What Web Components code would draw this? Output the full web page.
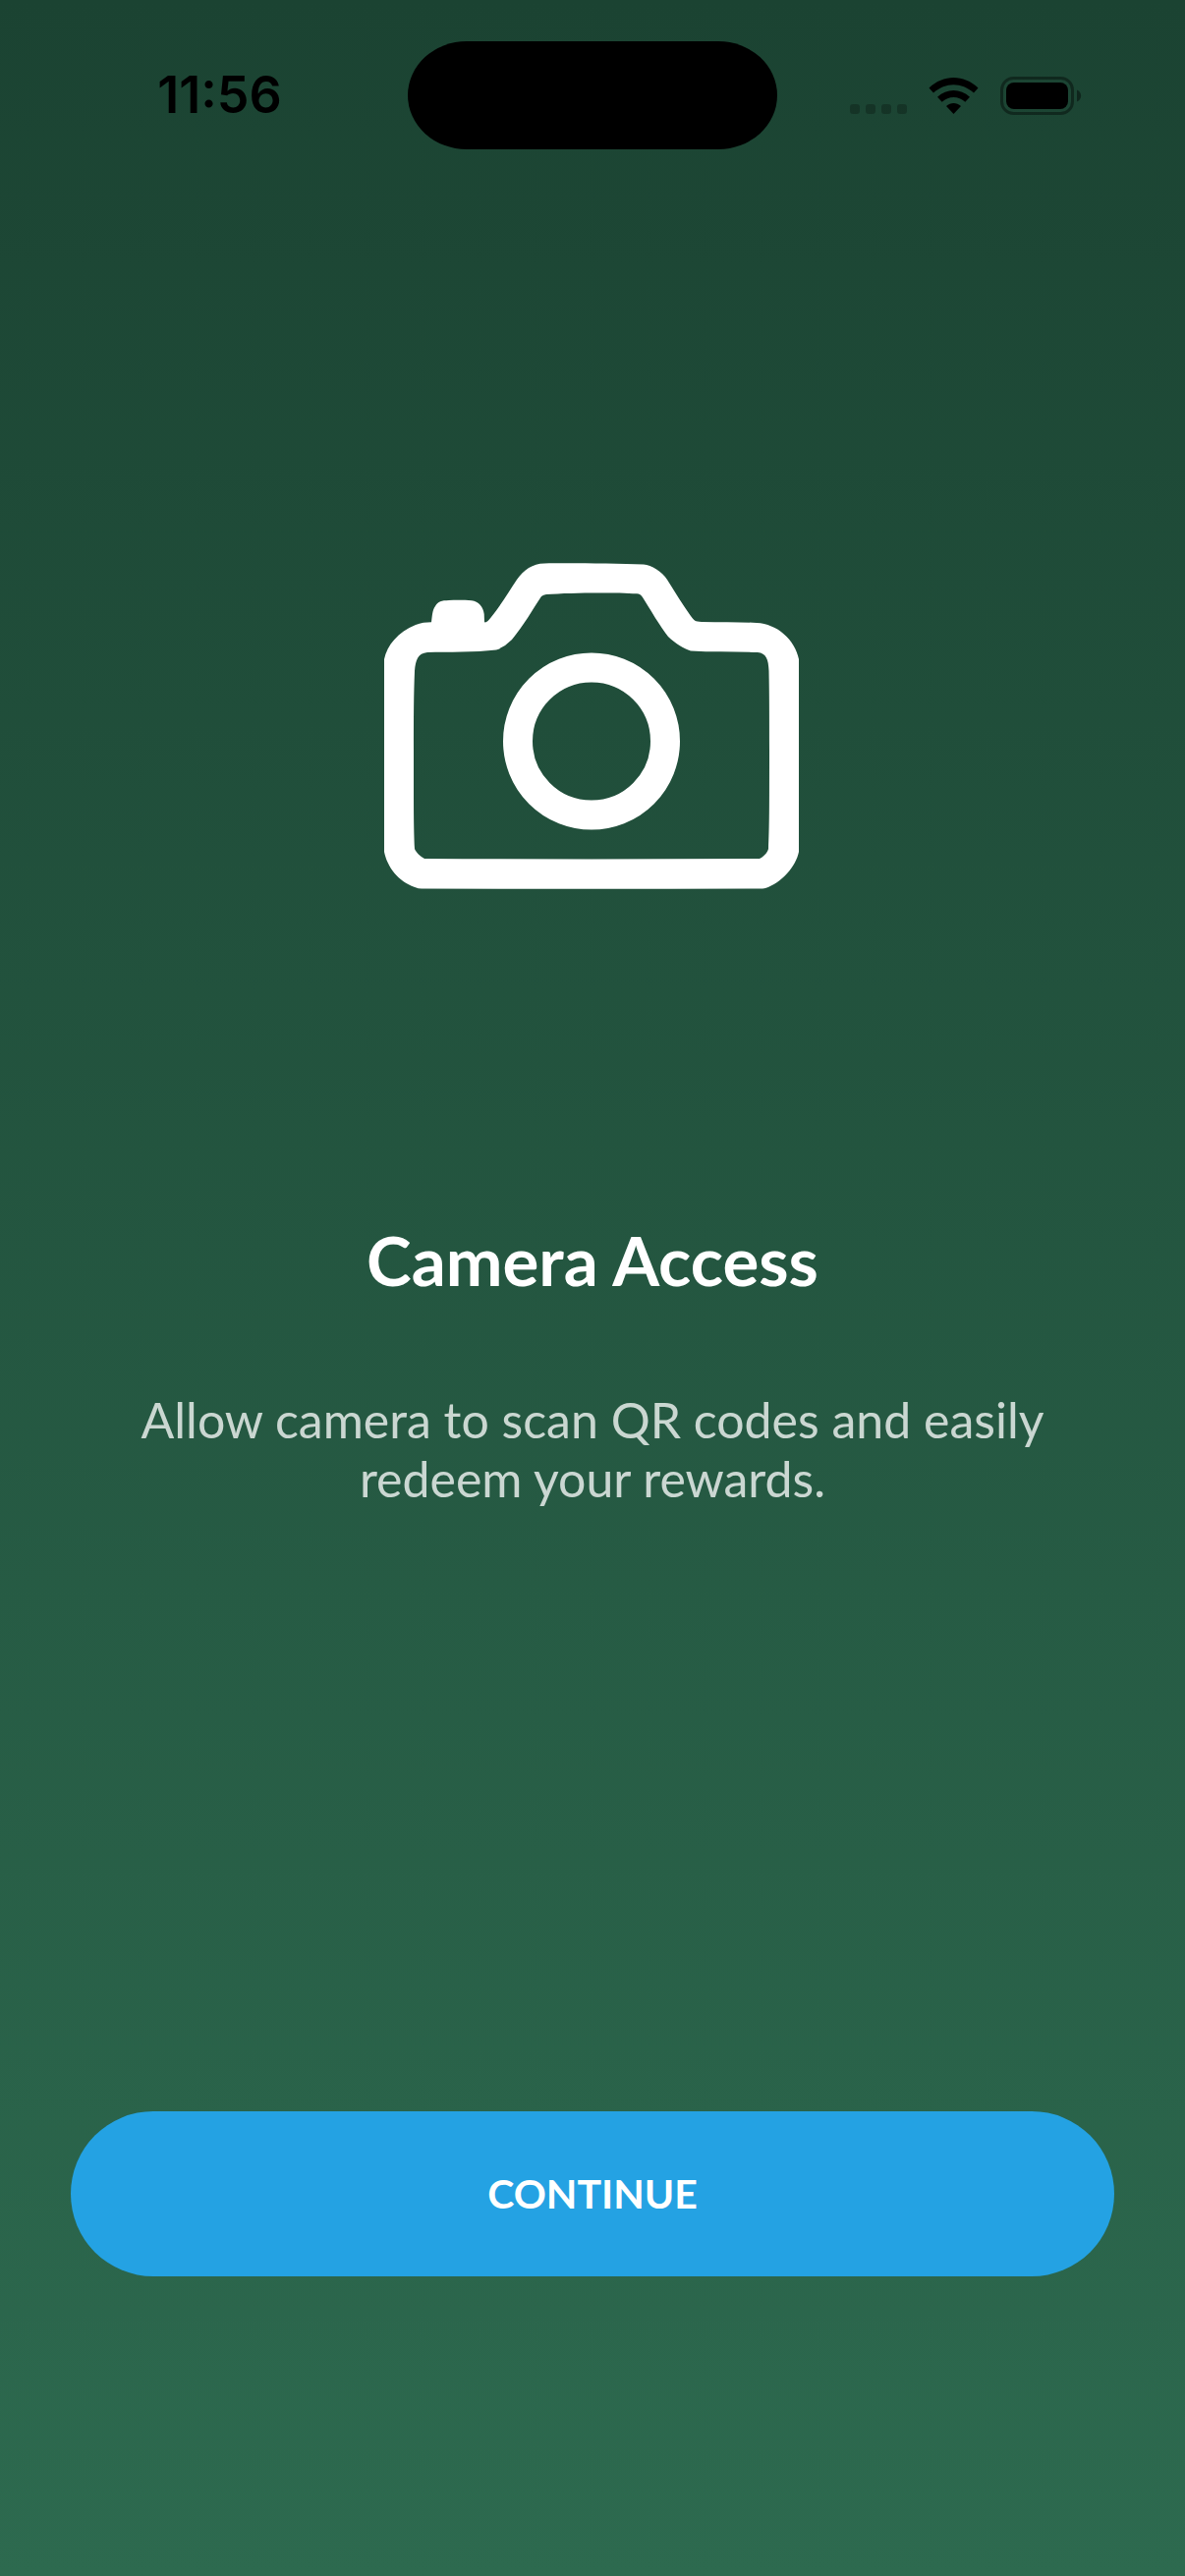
<!DOCTYPE html>
<html lang="en">
<head>
<meta charset="utf-8">
<meta name="viewport" content="width=device-width, initial-scale=1">
<title>Camera Access</title>
<style>
    body {
        margin: 0;
        font-family: Optima, Lato, sans-serif;
        color: #fff;
        background: #1b4332;
    }
</style>
</head>
<body>

<permission-screen>
    <status-bar slot="status" time="11:56"></status-bar>
    <camera-icon slot="icon"></camera-icon>
    <span slot="title">Camera Access</span>
    <span slot="message">Allow camera to scan QR codes and easily redeem your rewards.</span>
    <pill-button slot="action">CONTINUE</pill-button>
</permission-screen>

<script>
class StatusBar extends HTMLElement {

    constructor() {
        super();
        this.__shadowRoot = this.attachShadow({mode: 'open'});
    }

    connectedCallback() {
        this.render();
    }

    render() {
        this.__shadowRoot.innerHTML = `
        <style>
        :host {
            display: grid;
            grid-template-columns: 1fr 376px 1fr;
            align-items: center;
            justify-items: center;
            padding: 42px 32px 0;
            color: #000;
            font-family: Inter, sans-serif;
        }

        time {
            font-size: 52px;
            line-height: 60px;
            font-weight: 600;
        }

        .island {
            width: 100%;
            height: 110px;
            border-radius: 60px / 55px;
            background: #000;
        }

        .icons {
            display: flex;
            align-items: center;
        }

        svg {
            display: block;
        }
        </style>

        <time>${this.getAttribute('time')}</time>
        <div class="island"></div>
        <div class="icons">
            <svg width="236" height="40" viewBox="0 0 236 40" aria-hidden="true">
                <g fill-opacity=".24">
                    <rect x="0" y="29" width="10" height="10" rx="3"/>
                    <rect x="16" y="29" width="10" height="10" rx="3"/>
                    <rect x="32" y="29" width="10" height="10" rx="3"/>
                    <rect x="48" y="29" width="10" height="10" rx="3"/>
                </g>
                <path d="M80.5 12.5C95 -1.5 116 -1.5 130.5 12.5L126 17.5C113.5 6.5 97.5 6.5 85 17.5Z"/>
                <path d="M89 21.7C98.5 12.8 112.5 12.8 122 21.7L117.3 26.7C110.5 20.3 100.5 20.3 93.7 26.7Z"/>
                <path d="M98 31C102.5 27 108.5 27 113 31L105.5 39Z"/>
                <rect x="154.5" y="2.5" width="72" height="36" rx="12" fill="none" stroke="#000" stroke-width="3" stroke-opacity=".4"/>
                <rect x="159" y="7" width="63" height="27" rx="8"/>
                <path d="M231 14.5C236.5 16.5 236.5 24.5 231 26.5Z" fill-opacity=".45"/>
            </svg>
        </div>
        `;
    }
}

customElements.define('status-bar', StatusBar);

class CameraIcon extends HTMLElement {

    constructor() {
        super();
        this.__shadowRoot = this.attachShadow({mode: 'open'});
    }

    connectedCallback() {
        this.render();
    }

    render() {
        this.__shadowRoot.innerHTML = `
        <style>
        :host {
            display: block;
            width: 424px;
        }

        svg {
            display: block;
            width: 100%;
            height: auto;
        }
        </style>

        <svg viewBox="0 0 424 332" fill="#fff" aria-hidden="true">
            <path fill-rule="evenodd" d="
                M0 98C3 84 14 70 32 63C37 61 43 60.3 48 60.3
                C49 53 49 48 52 44C55 39 58 38.3 66 38C73 37.7 82 37.7 89 38.3C96 39 101 45 101.7 52L102 60.3
                C104 61 106 59 109 55C118 44 127 29 135 17C142 7 151 .5 163 .4
                C190 0 235 .5 264 1.5C272 2 283 9 288 17
                C297 31 304 43 312 54C316 59 316 59.5 323 60
                C343 60.5 363 60 379 61C400 62 418 78 422 98
                V294C419 309 404 326 388 331Q386 331.5 380 331.5
                Q211 332 38 331.5Q35 331.5 31 330C14 324 3 309 0 294Z
                M30 200C30 245 30 270 31 291C32 294 37 299 41 301Q211 302 382 301
                C386 299 390 295 391 291C392 270 392 245 392 200C392 160 392 135 391.5 110C391 98 389 92 380 91
                C358 90 335 91 312 89.5C305 87 296 82 289 75C281 65 270 46 263 35Q261 31.5 257 31.2
                C235 30 190 30 165 32Q162 32.3 160 34C152 46 141 65 130 78
                Q122 86 114 88.5C92 91 65 90.5 44 91C34 92 32 99 31 110C30 135 30 160 30 200Z"/>
            <circle cx="211" cy="181.5" r="75" fill="none" stroke="#fff" stroke-width="30"/>
        </svg>
        `;
    }
}

customElements.define('camera-icon', CameraIcon);

class PillButton extends HTMLElement {

    constructor() {
        super();
        this.__shadowRoot = this.attachShadow({mode: 'open'});
    }

    connectedCallback() {
        this.render();
    }

    render() {
        this.__shadowRoot.innerHTML = `
        <style>
        :host {
            display: block;
        }

        button {
            display: block;
            width: 100%;
            border: none;
            border-radius: 84px;
            padding: 60px 48px;
            background-color: #24a2e3;
            color: #fff;
            font-family: inherit;
            font-size: 41px;
            line-height: 48px;
            font-weight: 700;
            cursor: pointer;
        }
        </style>

        <button type="button"><slot></slot></button>
        `;
    }
}

customElements.define('pill-button', PillButton);

class PermissionScreen extends HTMLElement {

    constructor() {
        super();
        this.__shadowRoot = this.attachShadow({mode: 'open'});
    }

    connectedCallback() {
        this.render();
    }

    render() {
        this.__shadowRoot.innerHTML = `
        <style>
        :host {
            display: flex;
            flex-direction: column;
            box-sizing: border-box;
            min-height: 100vh;
            padding-bottom: 305px;
            background: linear-gradient(#1b4332, #2d6a4f);
        }

        main {
            flex: 1;
            display: flex;
            flex-direction: column;
            align-items: center;
            padding: 421px 72px 0;
            text-align: center;
        }

        h1 {
            margin: 338px 0 0;
            font-size: 69px;
            line-height: 80px;
            font-weight: 700;
        }

        p {
            margin: 92px 0 0;
            padding: 0 48px;
            font-size: 50px;
            line-height: 60px;
            color: rgba(255, 255, 255, .76);
        }

        .action {
            align-self: stretch;
            margin-top: auto;
        }
        </style>

        <slot name="status"></slot>
        <main>
            <slot name="icon"></slot>
            <h1><slot name="title"></slot></h1>
            <p><slot name="message"></slot></p>
            <div class="action"><slot name="action"></slot></div>
        </main>
        `;
    }
}

customElements.define('permission-screen', PermissionScreen);
</script>
</body>
</html>
